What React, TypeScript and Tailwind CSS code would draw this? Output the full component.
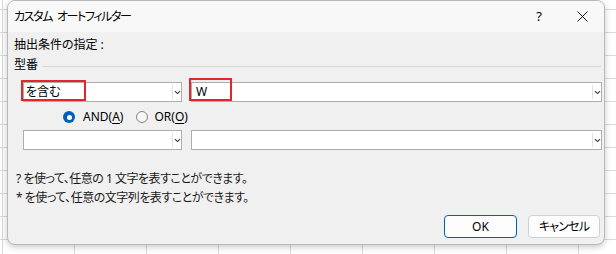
import React from "react";

const Chevron = () => (
  <svg width="7" height="5" viewBox="0 0 7 5" fill="none">
    <path d="M1 1.2 L3.5 3.6 L6 1.2" stroke="#333" strokeWidth="1.1" />
  </svg>
);

const Combo = ({ className, children }: { className: string; children?: React.ReactNode }) => {
  return (
    <div className={`relative flex h-[20px] items-stretch border border-[#adadad] bg-white ${className}`}>
      <div className="flex flex-1 items-center overflow-visible">{children}</div>
      <div className="my-[2px] flex w-[9px] items-center justify-center border-l border-[#e1e1e1]">
        <Chevron />
      </div>
    </div>
  );
};

const Radio = ({ checked }: { checked: boolean }) =>
  checked ? (
    <span className="flex h-[12px] w-[12px] shrink-0 items-center justify-center rounded-full bg-[#005fb8]">
      <span className="block h-[5px] w-[5px] rounded-full bg-white" />
    </span>
  ) : (
    <span className="block h-[12px] w-[12px] shrink-0 rounded-full border border-[#858585] bg-[#f7f7f7]" />
  );

const App = () => {
  return (
    <div className="h-[254px] w-[616px] overflow-hidden bg-white bg-[image:linear-gradient(to_right,#d9d9d9_1px,transparent_1px),linear-gradient(to_bottom,#d9d9d9_1px,transparent_1px)] bg-[size:72px_23px] bg-[position:2px_9px] pl-[7px] font-['Noto_Sans','Noto_Sans_CJK_JP',sans-serif] text-[12px] text-black [font-feature-settings:'palt']">
      <div className="flex h-[245px] w-[598px] flex-col overflow-hidden rounded-[8px] border border-[#b9b9b9] bg-[#f0f0f0] shadow-[0_2px_6px_rgba(0,0,0,0.22)]">
        {/* title bar */}
        <div className="flex h-[31px] shrink-0 items-center bg-[#f8f8f8] pl-[6px]">
          <span className="text-[12px] leading-none tracking-[-1.4px]">カスタム</span>
          <span className="ml-[5px] text-[12px] leading-none tracking-[-1.4px]">オートフィルター</span>
          <div className="ml-auto flex h-full">
            <div className="flex w-[44px] items-center justify-center text-[13px]">?</div>
            <div className="flex w-[43px] items-center justify-center">
              <svg width="11" height="11" viewBox="0 0 11 11">
                <path d="M0.5 0.5 L10.5 10.5 M10.5 0.5 L0.5 10.5" stroke="#1a1a1a" strokeWidth="1" />
              </svg>
            </div>
          </div>
        </div>

        {/* body */}
        <div className="flex flex-col pl-[6px]">
          <div className="mt-[3px] flex h-[20px] items-center">
            抽出条件の指定<span className="ml-[3px]">:</span>
          </div>
          <div className="flex h-[20px] items-center">
            <span>型番</span>
            <div className="ml-[5px] mr-[3px] h-px flex-1 translate-y-[1px] bg-[#d6d6d6]" />
          </div>

          <div className="mt-[7px] flex gap-[9px] pl-[9px]">
            <Combo className="w-[159px]">
              <span className="pl-[2px]">を含む</span>
              <span className="absolute left-[-3px] top-[-3px] h-[21px] w-[65px] border-2 border-[#e3262b]" />
            </Combo>
            <Combo className="w-[411px]">
              <span className="pl-[4px]">W</span>
              <span className="absolute left-[-3px] top-[-5px] h-[23px] w-[43px] border-2 border-[#e3262b]" />
            </Combo>
          </div>

          <div className="mt-[7px] flex h-[16px] items-center pl-[49px]">
            <Radio checked />
            <span className="ml-[8px]">
              AND(<span className="underline underline-offset-2">A</span>)
            </span>
            <span className="ml-[13px] flex">
              <Radio checked={false} />
            </span>
            <span className="ml-[6px]">
              OR(<span className="underline underline-offset-2">O</span>)
            </span>
          </div>

          <div className="mt-[5px] flex gap-[9px] pl-[9px]">
            <Combo className="w-[159px]" />
            <Combo className="w-[411px]" />
          </div>

          <div className="mt-[20px] flex h-[18px] items-center pl-[2px] tracking-[-0.5px] text-[#1a1a1a]">? を使って、任意の 1 文字を表すことができます。</div>
          <div className="mt-[1px] flex h-[18px] items-center pl-[2px] tracking-[-0.5px] text-[#1a1a1a]">* を使って、任意の文字列を表すことができます。</div>

          <div className="mt-[8px] flex justify-end gap-[11px] pr-[4px]">
            <button className="flex h-[23px] w-[73px] items-center justify-center rounded-[4px] border border-[#005fb8] bg-[#fdfdfd] text-[12px]">
              OK
            </button>
            <button className="flex h-[23px] w-[72px] items-center justify-center rounded-[4px] border border-[#d0d0d0] bg-[#fdfdfd] text-[12px] tracking-[-0.8px]">
              キャンセル
            </button>
          </div>
        </div>
      </div>
    </div>
  );
};

export default App;
